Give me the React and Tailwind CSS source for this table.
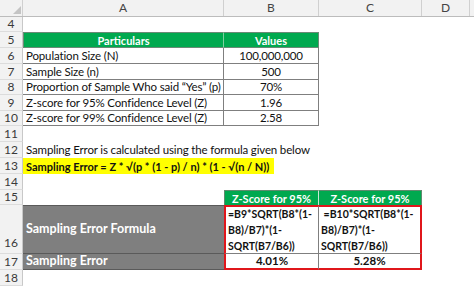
import React from "react";

const cellText = "text-[11.5px] tracking-[-0.15px] leading-none text-[#111] whitespace-nowrap";
const boldText = "text-[11px] leading-none font-bold whitespace-nowrap";
const grayText = "text-[12.5px] leading-none font-bold whitespace-nowrap text-white";

function RowNum({ n, h, bottom }) {
    return (
        <div
            className={`w-[23px] shrink-0 bg-[#f2f2f2] border-r border-b border-r-[#c8c8c8] border-b-[#dcdcdc] flex justify-center text-[12px] text-[#3a3a3a] ${bottom ? "items-end pb-[1px]" : "items-center"} ${h}`}
        >
            {n}
        </div>
    );
}

function Row({ n, h, bottom, children }) {
    return (
        <div className={`flex ${h}`}>
            <RowNum n={n} h={h} bottom={bottom} />
            {children}
        </div>
    );
}

function Blank() {
    return <div className="flex-1" />;
}

function DataRow({ n, h, label, value }) {
    return (
        <Row n={n} h={h}>
            <div className={`w-[201px] shrink-0 border-r border-b border-[#7f7f7f] flex items-center pl-[3px] ${cellText}`}>
                {label}
            </div>
            <div className={`w-[95px] shrink-0 border-r border-b border-[#7f7f7f] flex items-center justify-center ${cellText}`}>
                {value}
            </div>
            <Blank />
        </Row>
    );
}

export default function App() {
    return (
        <div className="w-[474px] h-[287px] overflow-hidden bg-white font-[Lato,'Liberation_Sans',sans-serif]">
            {/* column headers */}
            <div className="flex h-[17px] bg-[#f2f2f2] border-b border-[#bcbcbc] text-[12px] text-[#444]">
                <div className="w-[23px] shrink-0 border-r border-[#d0d0d0] flex items-end justify-end pr-[1px] pb-[2px]">
                    <svg width="8" height="8" viewBox="0 0 8 8">
                        <polygon points="8,0 8,8 0,8" fill="#c4c4c4" />
                    </svg>
                </div>
                <div className="w-[201px] shrink-0 border-r border-[#d0d0d0] flex items-center justify-center">A</div>
                <div className="w-[95px] shrink-0 border-r border-[#d0d0d0] flex items-center justify-center">B</div>
                <div className="w-[103px] shrink-0 border-r border-[#d0d0d0] flex items-center justify-center">C</div>
                <div className="w-[48px] shrink-0 border-r border-[#d0d0d0] flex items-center justify-center">D</div>
                <Blank />
            </div>

            <Row n="4" h="h-[15px]">
                <Blank />
            </Row>

            <Row n="5" h="h-[16px]">
                <div className={`w-[201px] shrink-0 bg-[#00a94f] border border-r-[#7fcf9f] border-[#6a8a75] flex items-center justify-center text-white ${boldText}`}>
                    Particulars
                </div>
                <div className={`w-[95px] shrink-0 bg-[#00a94f] border-y border-r border-[#6a8a75] flex items-center justify-center text-white ${boldText}`}>
                    Values
                </div>
                <Blank />
            </Row>

            <DataRow n="6" h="h-[16px]" label="Population Size (N)" value="100,000,000" />
            <DataRow n="7" h="h-[16px]" label="Sample Size (n)" value="500" />
            <DataRow n="8" h="h-[15px]" label="Proportion of Sample Who said “Yes” (p)" value="70%" />
            <DataRow n="9" h="h-[16px]" label="Z-score for 95% Confidence Level (Z)" value="1.96" />
            <DataRow n="10" h="h-[15px]" label="Z-score for 99% Confidence Level (Z)" value="2.58" />

            <Row n="11" h="h-[16px]">
                <Blank />
            </Row>

            <Row n="12" h="h-[16px]">
                <div className={`flex-1 flex items-center pl-[3px] ${cellText}`}>
                    Sampling Error is calculated using the formula given below
                </div>
            </Row>

            <Row n="13" h="h-[16px]">
                <div className="flex-1 flex items-stretch">
                    <div className={`w-[251px] bg-[#ffff00] flex items-center pl-[3px] text-[#111] ${boldText}`}>
                        Sampling Error = Z * √(p * (1 - p) / n) * (1 - √(n / N))
                    </div>
                </div>
            </Row>

            <Row n="14" h="h-[16px]">
                <Blank />
            </Row>

            <Row n="15" h="h-[15px]">
                <div className="w-[201px] shrink-0" />
                <div className={`w-[95px] shrink-0 bg-[#00a94f] border-t border-l border-[#5f8a6e] border-r border-r-[#c9e8d4] flex items-center justify-center text-white ${boldText}`}>
                    Z-Score for 95%
                </div>
                <div className={`w-[103px] shrink-0 bg-[#00a94f] border-t border-r border-[#5f8a6e] flex items-center justify-center text-white ${boldText}`}>
                    Z-Score for 95%
                </div>
                <Blank />
            </Row>

            <Row n="16" h="h-[49px]" bottom>
                <div className={`w-[201px] shrink-0 bg-[#7f7f7f] border-t border-b border-[#5a5a5a] flex items-center pl-[3px] ${grayText}`}>
                    Sampling Error Formula
                </div>
                <div className="w-[95px] shrink-0 border-t-2 border-l-2 border-[#e0161b] border-r border-r-[#7f7f7f] border-b border-b-[#7f7f7f] flex flex-col justify-center pl-[2px] text-[10.5px] leading-[16px] font-bold text-[#111] whitespace-nowrap overflow-hidden">
                    <span>=B9*SQRT(B8*(1-</span>
                    <span>B8)/B7)*(1-</span>
                    <span>SQRT(B7/B6))</span>
                </div>
                <div className="w-[103px] shrink-0 border-t-2 border-r-2 border-[#e0161b] border-b border-b-[#7f7f7f] flex flex-col justify-center pl-[2px] text-[10.5px] leading-[16px] font-bold text-[#111] whitespace-pre overflow-hidden">
                    <span> =B10*SQRT(B8*(1-</span>
                    <span>B8)/B7)*(1-</span>
                    <span>SQRT(B7/B6))</span>
                </div>
                <Blank />
            </Row>

            <Row n="17" h="h-[16px]">
                <div className={`w-[201px] shrink-0 bg-[#7f7f7f] border-b border-[#5a5a5a] flex items-center pl-[3px] ${grayText}`}>
                    Sampling Error
                </div>
                <div className={`w-[95px] shrink-0 border-l-2 border-b-2 border-[#e0161b] border-r border-r-[#7f7f7f] flex items-center justify-center text-[#111] text-[11.5px] leading-none font-bold`}>
                    4.01%
                </div>
                <div className={`w-[103px] shrink-0 border-r-2 border-b-2 border-[#e0161b] flex items-center justify-center text-[#111] text-[11.5px] leading-none font-bold`}>
                    5.28%
                </div>
                <Blank />
            </Row>

            <Row n="18" h="h-[16px]">
                <Blank />
            </Row>
        </div>
    );
}
